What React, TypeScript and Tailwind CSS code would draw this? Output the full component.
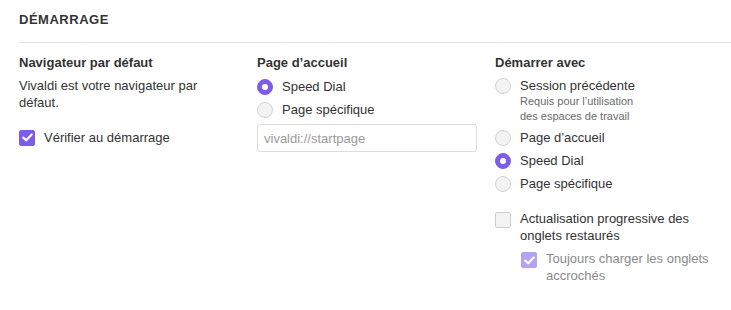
const Check = ({ checked, disabled }: { checked: boolean; disabled?: boolean }) => (
  <span
    className={`flex h-4 w-4 shrink-0 items-center justify-center rounded-[2px] border ${
      checked
        ? disabled
          ? "border-[#b3a3f2] bg-[#b3a3f2]"
          : "border-[#7c5ce8] bg-[#7c5ce8]"
        : "border-[#cfcfcf] bg-[#f3f3f3]"
    }`}
  >
    {checked && (
      <svg width="11" height="9" viewBox="0 0 11 9" fill="none">
        <path d="M1.3 4.6 4.2 7.3 9.7 1.6" stroke="white" strokeWidth="2.2" strokeLinecap="round" strokeLinejoin="round" />
      </svg>
    )}
  </span>
);

const Radio = ({ checked }: { checked: boolean }) => (
  <span
    className={`flex h-4 w-4 shrink-0 items-center justify-center rounded-full border ${
      checked ? "border-[#7c5ce8] bg-[#7c5ce8]" : "border-[#d2d2d2] bg-[#f3f3f3]"
    }`}
  >
    {checked && <span className="h-[6px] w-[6px] rounded-full bg-white" />}
  </span>
);

const RadioRow = ({ label, checked }: { label: string; checked?: boolean }) => (
  <div className="flex h-[23px] items-center gap-[9px]">
    <Radio checked={!!checked} />
    <span>{label}</span>
  </div>
);

export default function App() {
  return (
    <div
      className="min-h-[310px] w-[731px] bg-white pl-[19px] pt-[12px] text-[13px] leading-[17px] text-[#333]"
      style={{ fontFamily: '"Liberation Sans", Arial, sans-serif' }}
    >
      <h2 className="text-[13px] font-bold leading-[16px] tracking-[0.04em] text-[#333]">DÉMARRAGE</h2>
      <div className="mt-[14px] h-px bg-[#e2e2e2]" />

      <div className="mt-[11px] flex gap-[18px]">
        {/* col 1 */}
        <div className="w-[220px] pr-[10px]">
          <h3 className="font-bold">Navigateur par défaut</h3>
          <p className="mt-[6px]">Vivaldi est votre navigateur par défaut.</p>
          <label className="mt-[18px] flex items-center gap-[9px]">
            <Check checked />
            <span>Vérifier au démarrage</span>
          </label>
        </div>

        {/* col 2 */}
        <div className="w-[220px]">
          <h3 className="font-bold">Page d’accueil</h3>
          <div className="mt-[4px]">
            <RadioRow label="Speed Dial" checked />
            <RadioRow label="Page spécifique" />
          </div>
          <input
            className="mt-[3px] h-[28px] w-[220px] rounded-[3px] border border-[#dcdcdc] bg-white px-[6px] text-[13px] text-[#333] outline-none placeholder:text-[#9a9a9a]"
            placeholder="vivaldi://startpage"
          />
        </div>

        {/* col 3 */}
        <div className="w-[220px]">
          <h3 className="font-bold">Démarrer avec</h3>
          <div className="mt-[6px] flex gap-[9px]">
            <span className="mt-[1px]">
              <Radio checked={false} />
            </span>
            <div>
              <div>Session précédente</div>
              <div className="w-[125px] text-[11px] leading-[15px] text-[#6b6b6b]">
                Requis pour l’utilisation des espaces de travail
              </div>
            </div>
          </div>
          <div className="mt-[2px]">
            <RadioRow label="Page d’accueil" />
            <RadioRow label="Speed Dial" checked />
            <RadioRow label="Page spécifique" />
          </div>
          <label className="mt-[15px] flex gap-[9px]">
            <span className="mt-[2px]">
              <Check checked={false} />
            </span>
            <span>Actualisation progressive des onglets restaurés</span>
          </label>
          <label className="ml-[26px] mt-[6px] flex gap-[9px] text-[#8a8a8a]">
            <span className="mt-[2px]">
              <Check checked disabled />
            </span>
            <span>Toujours charger les onglets accrochés</span>
          </label>
        </div>
      </div>
    </div>
  );
}
